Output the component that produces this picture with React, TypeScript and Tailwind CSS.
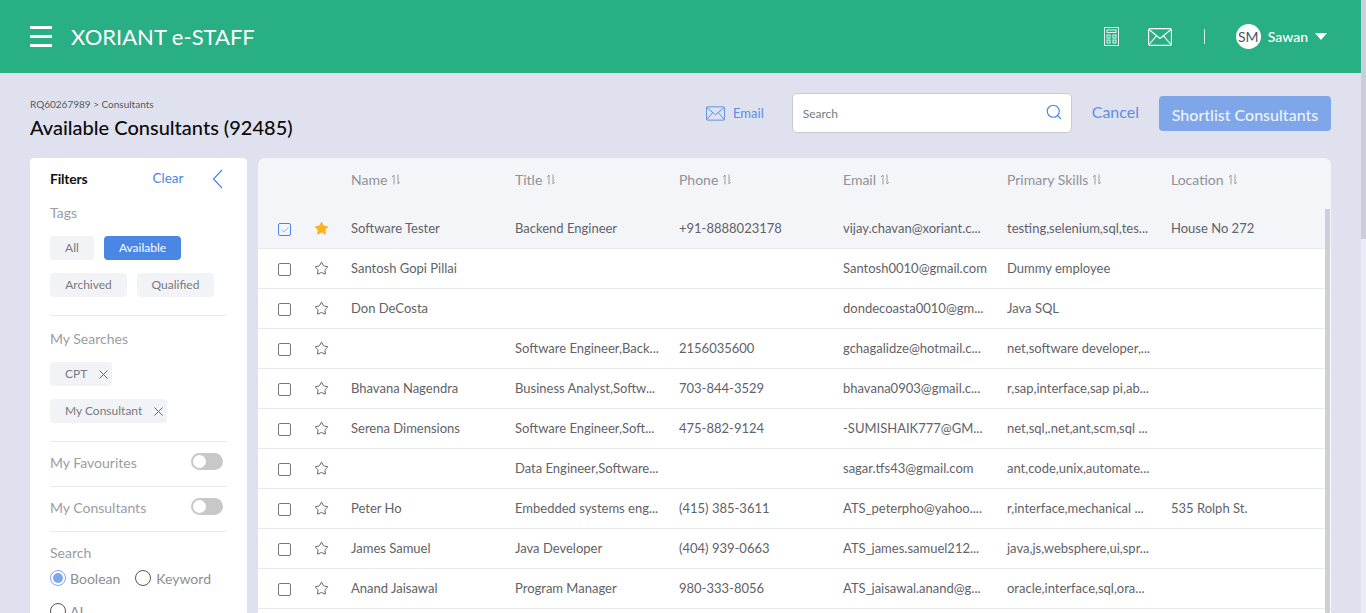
import React from 'react';
import { Search, Star, Check } from 'lucide-react';

type Row = {
  name: string;
  title: string;
  phone: string;
  email: string;
  skills: string;
  location: string;
};

const rows: Row[] = [
  { name: 'Software Tester', title: 'Backend Engineer', phone: '+91-8888023178', email: 'vijay.chavan@xoriant.c...', skills: 'testing,selenium,sql,tes...', location: 'House No 272' },
  { name: 'Santosh Gopi Pillai', title: '', phone: '', email: 'Santosh0010@gmail.com', skills: 'Dummy employee', location: '' },
  { name: 'Don DeCosta', title: '', phone: '', email: 'dondecoasta0010@gm...', skills: 'Java SQL', location: '' },
  { name: '', title: 'Software Engineer,Back...', phone: '2156035600', email: 'gchagalidze@hotmail.c...', skills: 'net,software developer,...', location: '' },
  { name: 'Bhavana Nagendra', title: 'Business Analyst,Softw...', phone: '703-844-3529', email: 'bhavana0903@gmail.c...', skills: 'r,sap,interface,sap pi,ab...', location: '' },
  { name: 'Serena Dimensions', title: 'Software Engineer,Soft...', phone: '475-882-9124', email: '-SUMISHAIK777@GM...', skills: 'net,sql,.net,ant,scm,sql ...', location: '' },
  { name: '', title: 'Data Engineer,Software...', phone: '', email: 'sagar.tfs43@gmail.com', skills: 'ant,code,unix,automate...', location: '' },
  { name: 'Peter Ho', title: 'Embedded systems eng...', phone: '(415) 385-3611', email: 'ATS_peterpho@yahoo....', skills: 'r,interface,mechanical ...', location: '535 Rolph St.' },
  { name: 'James Samuel', title: 'Java Developer', phone: '(404) 939-0663', email: 'ATS_james.samuel212...', skills: 'java,js,websphere,ui,spr...', location: '' },
  { name: 'Anand Jaisawal', title: 'Program Manager', phone: '980-333-8056', email: 'ATS_jaisawal.anand@g...', skills: 'oracle,interface,sql,ora...', location: '' },
];

const columns = ['Name', 'Title', 'Phone', 'Email', 'Primary Skills', 'Location'];

const SortIcon = () => (
  <svg width="10" height="11" viewBox="0 0 10 11" fill="none" stroke="#9a9a9a" strokeWidth="1" className="ml-[4px] mt-[1px]">
    <path d="M3 10.5V1M3 1L1 3M7 0.5V10M7 10L9 8" />
  </svg>
);

const EnvelopeIcon = ({ color, w, h }: { color: string; w: number; h: number }) => (
  <svg width={w} height={h} viewBox="0 0 24 18" fill="none" stroke={color} strokeWidth="1.1">
    <rect x="0.6" y="0.6" width="22.8" height="16.8" rx="1.5" />
    <path d="M1 1.5L12 10.5L23 1.5M1 16.5L8.5 7.8M23 16.5L15.5 7.8" />
  </svg>
);

const CalculatorIcon = () => (
  <svg width="15" height="19" viewBox="0 0 15 19" fill="none" stroke="#ffffff" strokeWidth="1" opacity="0.85">
    <rect x="0.5" y="0.5" width="14" height="18" />
    <rect x="3" y="3" width="9" height="2.5" />
    <rect x="3" y="8" width="3" height="3" />
    <rect x="9" y="8" width="3" height="3" />
    <rect x="3" y="13" width="3" height="3" />
    <rect x="9" y="13" width="3" height="3" />
  </svg>
);

const CloseChip = ({ label }: { label: string }) => (
  <div className="h-6 rounded-[4px] flex items-center bg-[#f2f3f6] text-[#777a80] text-[12px] pl-[15px] pr-[4px]">
    {label}
    <svg width="9" height="9" viewBox="0 0 9 9" fill="none" stroke="#666666" strokeWidth="1" className="ml-[12px] mt-[1px]">
      <path d="M0.5 0.5L8.5 8.5M8.5 0.5L0.5 8.5" />
    </svg>
  </div>
);

const TagChip = ({ label, width, active }: { label: string; width: string; active?: boolean }) => (
  <div
    className={`${width} flex justify-center h-6 items-center rounded-[4px] text-[12px] ${
      active ? 'bg-[#4a86e4] text-white' : 'bg-[#f2f3f6] text-[#777a80]'
    }`}
  >
    {label}
  </div>
);

const Toggle = () => (
  <div className="w-8 h-[17px] -mt-[1px] rounded-full bg-[#c8c8c8] flex items-center pl-[2px]">
    <div className="w-[13px] h-[13px] rounded-full bg-white" />
  </div>
);

const FilterPanel = () => (
  <aside className="w-[217px] h-[460px] bg-white rounded-[4px] shrink-0 pl-5 pr-5 pt-[13px]">
    <div className="flex items-center h-4 -mt-[1px]">
      <span className="text-[14px] font-bold text-[#111111] tracking-[-0.2px]">Filters</span>
      <span className="ml-[65px] mt-[1px] text-[13.5px] text-[#4a86e4]">Clear</span>
      <svg width="11" height="20" viewBox="0 0 11 20" fill="none" stroke="#4a86e4" strokeWidth="1.2" className="ml-[28px] mt-[1px] shrink-0">
        <path d="M10 1L1.5 10L10 19" />
      </svg>
    </div>
    <div className="mt-[16px] text-[14px] text-[#9a9da3]">Tags</div>
    <div className="mt-[13px] flex gap-[10px]">
      <TagChip label="All" width="w-11" />
      <TagChip label="Available" width="w-[77px]" active />
    </div>
    <div className="mt-[13px] flex gap-[10px]">
      <TagChip label="Archived" width="w-[77px]" />
      <TagChip label="Qualified" width="w-[77px]" />
    </div>
    <div className="mt-[18px] border-t border-[#e9eaee]" />
    <div className="mt-[12px] text-[14px] text-[#9a9da3]">My Searches</div>
    <div className="mt-[13px] flex">
      <CloseChip label="CPT" />
    </div>
    <div className="mt-[13px] flex">
      <CloseChip label="My Consultant" />
    </div>
    <div className="mt-[18px] border-t border-[#e9eaee]" />
    <div className="h-[45px] pb-[4px] flex items-center justify-between pr-1 border-b border-[#e9eaee]">
      <span className="text-[14px] text-[#9a9da3]">My Favourites</span>
      <Toggle />
    </div>
    <div className="h-[45px] pb-[4px] flex items-center justify-between pr-1 border-b border-[#e9eaee]">
      <span className="text-[14px] text-[#9a9da3]">My Consultants</span>
      <Toggle />
    </div>
    <div className="mt-[10px] text-[14px] text-[#9a9da3]">Search</div>
    <div className="mt-[5px] flex items-center h-5 text-[14px] text-[#8b8e94]">
      <span className="w-4 h-4 rounded-full border border-[#7ea7ea] flex items-center justify-center">
        <span className="w-[10px] h-[10px] rounded-full bg-[#7ea7ea]" />
      </span>
      <span className="ml-[4px]">Boolean</span>
      <span className="ml-[15px] w-4 h-4 rounded-full border border-[#555555]" />
      <span className="ml-[5px]">Keyword</span>
    </div>
    <div className="mt-[13px] flex items-center h-5 text-[14px] text-[#8b8e94]">
      <span className="w-4 h-4 rounded-full border border-[#555555]" />
      <span className="ml-[4px]">AI</span>
    </div>
  </aside>
);

const ConsultantRow = ({ row, selected }: { row: Row; selected: boolean }) => (
  <div className={`h-10 flex items-center border-b border-[#e8e9ed] text-[13px] text-[#5f6268] ${selected ? 'bg-[#f4f5f9]' : 'bg-white'}`}>
    <div className="w-[56px] pl-[20px] pt-[2px] shrink-0">
      {selected ? (
        <div className="w-[13px] h-[13px] rounded-[2px] border border-[#4a86e4] flex items-center justify-center">
          <Check className="w-[10px] h-[10px] text-[#4a86e4]" strokeWidth={1.5} />
        </div>
      ) : (
        <div className="w-[13px] h-[13px] rounded-[2px] border border-[#777777] bg-white" />
      )}
    </div>
    <div className="w-[37px] shrink-0">
      <Star
        className={`w-[15px] h-[15px] ${selected ? 'text-[#fbb321] fill-[#fbb321]' : 'text-[#555a66]'}`}
        strokeWidth={selected ? 1 : 1.5}
      />
    </div>
    <div className="w-[164px] shrink-0 whitespace-nowrap">{row.name}</div>
    <div className="w-[164px] shrink-0 whitespace-nowrap">{row.title}</div>
    <div className="w-[164px] shrink-0 whitespace-nowrap">{row.phone}</div>
    <div className="w-[164px] shrink-0 whitespace-nowrap">{row.email}</div>
    <div className="w-[164px] shrink-0 whitespace-nowrap">{row.skills}</div>
    <div className="w-[150px] shrink-0 whitespace-nowrap">{row.location}</div>
  </div>
);

const ConsultantTable = () => (
  <section className="relative flex-1 bg-white rounded-t-[8px] overflow-hidden">
    <div className="h-[51px] bg-[#f4f5f9] flex pl-[93px] pt-[10px]">
      {columns.map((col) => (
        <div key={col} className="w-[164px] shrink-0 flex items-center h-[22px] text-[14px] text-[#8f9297]">
          {col}
          <SortIcon />
        </div>
      ))}
    </div>
    {rows.map((row, i) => (
      <ConsultantRow key={i} row={row} selected={i === 0} />
    ))}
    <div className="h-10 bg-white" />
    {/* inner scrollbar */}
    <div className="absolute right-[1px] top-[51px] bottom-0 w-[5px] bg-[#ccced9]" />
  </section>
);

export default function App() {
  return (
    <div className="h-[613px] overflow-hidden flex bg-[#dfe2ee] font-['Lato','Noto_Sans',sans-serif]">
      <div className="flex-1 min-w-0">
        <header className="h-[73px] bg-[#28b084] flex items-center pl-[30px] pr-[34px] text-white">
          <div className="w-[22px] flex flex-col gap-[6px]">
            <span className="h-[3px] bg-white" />
            <span className="h-[3px] bg-white" />
            <span className="h-[3px] bg-white" />
          </div>
          <span className="ml-[19px] text-[22px] leading-none">XORIANT e-STAFF</span>
          <div className="ml-auto flex items-center">
            <CalculatorIcon />
            <div className="ml-[29px]">
              <EnvelopeIcon color="#ffffff" w={24} h={18} />
            </div>
            <span className="ml-[32px] h-[15px] w-[1px] bg-white/80" />
            <div className="ml-[31px] w-[25px] h-[25px] rounded-full bg-white text-[#4b5563] text-[14px] flex items-center justify-center">SM</div>
            <span className="ml-[7px] -mt-[1px] text-[14px] font-medium">Sawan</span>
            <span className="ml-[7px] w-0 h-0 border-l-[6px] border-r-[6px] border-t-[7px] border-l-transparent border-r-transparent border-t-white" />
          </div>
        </header>

        <main className="pl-[30px] pr-[30px]">
          <div className="h-[85px] flex items-start">
            <div className="pt-[25px]">
              <div className="text-[10px] leading-3 text-[#555860]">RQ60267989 &gt; Consultants</div>
              <h1 className="mt-[5px] text-[20px] leading-6 font-medium text-[#0b0b0b]">Available Consultants (92485)</h1>
            </div>
            <div className="ml-auto flex items-start">
              <div className="mt-[31px] flex items-center">
                <EnvelopeIcon color="#4a86e4" w={19} h={15} />
                <span className="ml-[8px] text-[13px] text-[#5b8de6]">Email</span>
              </div>
              <div className="ml-[28px] mt-[20px] w-[280px] h-[40px] bg-white rounded-[5px] border border-[#c9cbd2] flex items-center pl-[10px] pr-[8px]">
                <span className="mt-[1px] text-[12px] text-[#777a80]">Search</span>
                <Search className="ml-auto w-[18px] h-[18px] text-[#4a86e4] -mt-[2px]" strokeWidth={1.5} />
              </div>
              <span className="ml-[20px] mt-[27px] text-[16px] text-[#5b8de6]">Cancel</span>
              <button className="ml-[20px] mt-[23px] w-[172px] h-[35px] pt-[3px] rounded-[4px] bg-[#7fa6e8] text-[16px] text-[#eef2fb] font-medium">
                Shortlist Consultants
              </button>
            </div>
          </div>
          <div className="flex gap-[11px]">
            <FilterPanel />
            <ConsultantTable />
          </div>
        </main>
      </div>
      {/* page scrollbar */}
      <div className="w-[5px] shrink-0 bg-[#ebebf3]">
        <div className="h-[239px] bg-[#cbcddb]" />
      </div>
    </div>
  );
}
